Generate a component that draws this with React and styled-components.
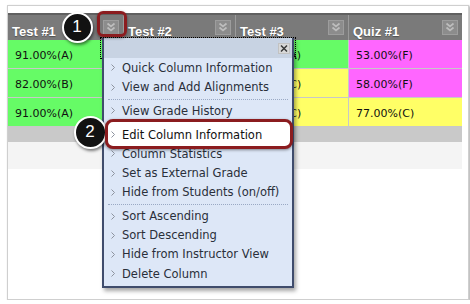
import React from "react";
import styled, { createGlobalStyle } from "styled-components";

const Global = createGlobalStyle`
  html, body { margin: 0; padding: 0; background: #ffffff; }
  body { font-family: "DejaVu Sans", Verdana, sans-serif; }
`;

const Frame = styled.div`
  position: relative;
  box-sizing: border-box;
  margin: 5px 0 0 7px;
  width: 462px;
  height: 295px;
  border: 1px solid #cfcfcf;
  box-shadow: 1px 1px 2px rgba(0, 0, 0, 0.35);
  background: #ffffff;
  padding-top: 7px;
`;

const Grid = styled.div`
  display: grid;
  grid-template-columns: 115px 112px 113px 114px;
  width: 454px;
`;

const HeaderRow = styled(Grid)`
  height: 27px;
  box-sizing: border-box;
  background: #7a7a7a;
  border-top: 2px solid #606060;
`;

const HeaderCell = styled.div`
  display: flex;
  align-items: center;
  justify-content: space-between;
  padding: 0 4px 0 4px;
  border-left: ${(p) => (p.$first ? "none" : "1px solid #9a9a9a")};
`;

const HeaderLabel = styled.span`
  font-family: "Liberation Sans", Arial, sans-serif;
  font-weight: bold;
  font-size: 13px;
  line-height: 14px;
  color: #ffffff;
  text-shadow: 0 1px 1px rgba(0, 0, 0, 0.35);
  padding-top: 8px;
`;

const DataRow = styled(Grid)`
  height: 29px;
`;

const cellColors = { green: "#66fb66", yellow: "#ffff66", pink: "#ff66ff" };

const Cell = styled.div`
  display: flex;
  align-items: center;
  box-sizing: border-box;
  padding: 2px 0 0 7px;
  font-size: 11px;
  color: #111111;
  background: ${(p) => cellColors[p.$tone]};
  border-left: ${(p) => (p.$first ? "none" : "1px solid #c8c8c8")};
  border-bottom: 1px solid #c8c8c8;
`;

const FooterBar = styled.div`
  width: 454px;
  height: 15px;
  background: #c9c9c9;
`;

const FooterPad = styled.div`
  width: 454px;
  height: 27px;
  background: #f4f4f4;
`;

const FocusRing = styled.div`
  position: absolute;
  left: 92px;
  top: 31px;
  width: 196px;
  height: 22px;
  box-sizing: border-box;
  border: 1px dotted #000000;
`;

const Menu = styled.div`
  position: absolute;
  left: 94px;
  top: 32px;
  width: 192px;
  box-sizing: border-box;
  border: 2px solid #3f4c6c;
  border-top: none;
  background: #dde7f7;
  box-shadow: 2px 3px 4px rgba(0, 0, 0, 0.35);
  padding: 0.4px 0 3px 0;
`;

const MenuTitle = styled.div`
  display: flex;
  align-items: center;
  justify-content: flex-end;
  height: 20px;
  background: #c8d3e3;
  padding-right: 2px;
`;

const CloseButton = styled.div`
  display: flex;
  align-items: center;
  justify-content: center;
  width: 12px;
  height: 11px;
  box-sizing: border-box;
  background: #d9d9d9;
  border: 1px solid #c2c2c2;
`;

const MenuItem = styled.div`
  position: relative;
  z-index: ${(p) => (p.$marked ? 1 : "auto")};
  display: flex;
  align-items: center;
  height: 19.2px;
  padding-left: 7px;
  font-size: 11.5px;
  color: ${(p) => (p.$marked ? "#111111" : "#2a2f3a")};
  white-space: nowrap;

  &::before {
    content: "";
    display: ${(p) => (p.$marked ? "block" : "none")};
    position: absolute;
    left: 1px;
    right: -1px;
    top: -6.2px;
    bottom: -4.6px;
    z-index: -1;
    box-sizing: border-box;
    border: 3.5px solid #8b1c1f;
    border-radius: 8px;
    background: #ffffff;
    box-shadow: 0 1px 3px rgba(0, 0, 0, 0.45);
  }
`;

const Arrow = styled.svg`
  width: 4px;
  height: 7px;
  margin-right: 7px;
  flex: none;
`;

const Separator = styled.div`
  height: 0;
  margin: 1.8px 4px;
  border-top: 1px dotted #9aa9c4;
`;

const Highlight = styled.div`
  position: absolute;
  left: 89px;
  top: 5px;
  width: 30px;
  height: 26px;
  box-sizing: border-box;
  border: 3px solid #8b1c1f;
  border-radius: 6px;
  box-shadow: 0 1px 3px rgba(0, 0, 0, 0.45);
`;

const Callout = styled.div`
  position: absolute;
  left: ${(p) => p.$x}px;
  top: ${(p) => p.$y}px;
  width: ${(p) => p.$d}px;
  height: ${(p) => p.$d}px;
  box-sizing: border-box;
  border: 2.5px solid #ffffff;
  border-radius: 50%;
  background: #121212;
  box-shadow: 1px 2px 3px rgba(0, 0, 0, 0.5);
  display: flex;
  align-items: center;
  justify-content: center;
  font-family: "Liberation Sans", Arial, sans-serif;
  font-size: 17px;
  color: #ffffff;
`;

const DropIcon = () => (
  <svg width="16" height="15" viewBox="0 0 16 15">
    <rect x="0.5" y="0.5" width="15" height="14" fill="#8c8c8c" stroke="#9d9d9d" />
    <path d="M4.5 3.5 L8 6.5 L11.5 3.5" fill="none" stroke="#bdbdbd" strokeWidth="1.7" />
    <path d="M4.5 7.5 L8 10.5 L11.5 7.5" fill="none" stroke="#bdbdbd" strokeWidth="1.7" />
  </svg>
);

const columns = ["Test #1", "Test #2", "Test #3", "Quiz #1"];

const rows = [
  [["91.00%(A)", "green"], ["88.00%(B)", "green"], ["95.00%(A)", "green"], ["53.00%(F)", "pink"]],
  [["82.00%(B)", "green"], ["79.00%(C)", "yellow"], ["76.00%(C)", "yellow"], ["58.00%(F)", "pink"]],
  [["91.00%(A)", "green"], ["85.00%(B)", "green"], ["78.00%(C)", "yellow"], ["77.00%(C)", "yellow"]],
];

const menuGroups = [
  ["Quick Column Information", "View and Add Alignments"],
  ["View Grade History"],
  ["Edit Column Information", "Column Statistics", "Set as External Grade", "Hide from Students (on/off)"],
  ["Sort Ascending", "Sort Descending", "Hide from Instructor View", "Delete Column"],
];

export default function App() {
  return (
    <>
      <Global />
      <Frame>
        <HeaderRow>
          {columns.map((c, i) => (
            <HeaderCell key={c} $first={i === 0}>
              <HeaderLabel>{c}</HeaderLabel>
              <DropIcon />
            </HeaderCell>
          ))}
        </HeaderRow>
        {rows.map((r, ri) => (
          <DataRow key={ri}>
            {r.map(([v, tone], ci) => (
              <Cell key={ci} $tone={tone} $first={ci === 0}>
                {v}
              </Cell>
            ))}
          </DataRow>
        ))}
        <FooterBar />
        <FooterPad />

        <FocusRing />
        <Menu>
          <MenuTitle>
            <CloseButton>
              <svg width="8" height="7" viewBox="0 0 8 7">
                <path d="M1 0.5 L7 6.5 M7 0.5 L1 6.5" stroke="#3a3a3a" strokeWidth="1.5" />
              </svg>
            </CloseButton>
          </MenuTitle>
          {menuGroups.map((g, gi) => (
            <React.Fragment key={gi}>
              {gi > 0 && <Separator />}
              {g.map((label) => (
                <MenuItem key={label} $marked={label === "Edit Column Information"}>
                  <Arrow viewBox="0 0 4 7">
                    <path d="M0.5 0.5 L3.5 3.5 L0.5 6.5" fill="none" stroke="#8d939e" strokeWidth="1" />
                  </Arrow>
                  {label}
                </MenuItem>
              ))}
            </React.Fragment>
          ))}
        </Menu>

        <Highlight />
        <Callout $x={53.5} $y={5.5} $d={31}>1</Callout>
        <Callout $x={65.5} $y={109.5} $d={33}>2</Callout>
      </Frame>
    </>
  );
}
